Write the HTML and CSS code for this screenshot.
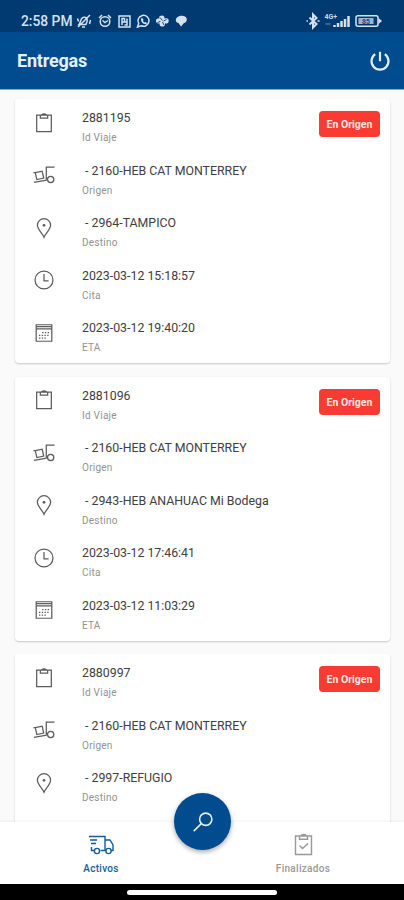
FILE: index.html
```
<!DOCTYPE html>
<html lang="es">
<head>
<meta charset="utf-8">
<title>Entregas</title>
<link rel="stylesheet" href="styles.css">
</head>
<body>
<svg class="defs" aria-hidden="true">
  <symbol id="clipboard" viewBox="0 0 24 24"><path d="M4 3.500h16v18H4zM8 3.500v3.200h8V3.500M9.500 3.500c0-2 5-2 5 0"/></symbol>
  <symbol id="loader" viewBox="0 0 24 24"><path d="M23.500 3.500h-9v13.500M1 20l14-2.500M2.500 9.500l7.500-1.600 1.700 7.500-7.500 1.600zM.5 9.500H3M15 16h1"/><circle cx="19.300" cy="16.800" r="3.400"/></symbol>
  <symbol id="pin" viewBox="0 0 24 24"><path d="M12 22C10.500 18 4.800 13.500 4.800 9a7.200 7.200 0 0 1 14.400 0c0 4.500-5.700 9-7.200 13z"/><circle class="solid" cx="12" cy="9" r="1.500"/></symbol>
  <symbol id="clock" viewBox="0 0 24 24"><circle cx="12" cy="12" r="9.800"/><path d="M12 5.500V13h5"/></symbol>
  <symbol id="calendar" viewBox="0 0 24 24"><path d="M3.500 3h17v18h-17zM3.500 7.500h17M3.500 5h17"/><path class="dots" d="M10 11.500h8M6.500 14.500h11.500M6.500 17.500h9"/></symbol>
</svg>
<div class="screen">
  <div class="status">
    <span class="time">2:58 PM</span>
    <svg class="status-left" viewBox="0 0 112 16">
      <path d="M3 11.500c2-2 1-6 4-7 3-1 5 1 4 4l-1 3zM2 14L14 2M6 14h3M1.500 5.500l1 3M14.500 7l-1 4"/>
      <circle cx="29" cy="8.500" r="4.800"/><path d="M23 5l3-3M35 5l-3-3M26.500 7.500l2.500 2 3-2"/>
      <path d="M43 3h11v11H43zM46 12V5.500h2.500V9H51V5.500M46 9h2M51 9v3h-2.500"/>
      <path d="M61.500 14l1.200-3.500a5.500 5.500 0 1 1 2.500 2.300z"/><path class="fill" d="M65 5.500l1.500-.5 1 2-.6 1 1.500 1.500 1-.6 1.600 1-.8 1.300c-3 .4-5.500-2.500-5.200-5.700z"/>
      <g transform="translate(2 0)"><path class="fill" d="M82 3c3-1.500 4.500 0 4.500 2.500 3-1 5 1 4 3.500-1 2-2.500 1.500-3.500 1.200.5 2.500-1.500 3.800-3.500 3.300-2-.5-2.200-2-1.800-3.200-2.500.7-4.200-.8-3.700-3 .5-2 2.300-2 3.500-1.500-.7-1-.5-2.200.5-2.800z"/><path class="gap" d="M82 4.500l2.500 3M88.500 6.500l-3 1.500M86 12l-1.500-3M79.500 9.500l3-1.200"/></g>
      <path class="fill" transform="translate(2 0)" d="M99 4.500c2-2 6-2 8-1 3 2 2 6-1 6.500L103 13.500 100.500 10c-3-.5-3.500-3.500-1.500-5.500z"/>
    </svg>
    <svg class="status-right" viewBox="0 0 78 18">
      <path class="bt" d="M3.500 5.500l7 6.500-3.500 3.500V2.500L10.500 6l-7 6.500"/><path d="M.5 9H2M11.500 9h2"/>
      <text class="net" x="18.500" y="7">4G+</text><path class="faint" d="M19.500 12h5"/>
      <path class="bars" d="M28.500 15v-2M32 15v-4M35.500 15V9M39 15V7M42.500 15V4"/>
      <path d="M52 3.800h18q2 0 2 2v6.400q0 2-2 2H52q-2 0-2-2V5.800q0-2 2-2z"/><path class="fill" d="M72.500 6l3.500 3-3.500 3z"/>
      <path class="charge" d="M52.500 6h15v6h-15z"/><text class="pct" x="56" y="11.700">85</text>
    </svg>
  </div>
  <header class="appbar">
    <h1>Entregas</h1>
    <svg class="power" viewBox="0 0 24 24"><path d="M7.200 5.200a8.500 8.500 0 1 0 9.600 0M12 2.800v9.500"/></svg>
  </header>
  <main class="list">
    <article class="card">
      <span class="badge">En Origen</span>
      <div class="row"><svg><use href="#clipboard"/></svg><div><p>2881195</p><small>Id Viaje</small></div></div>
      <div class="row"><svg><use href="#loader"/></svg><div><p class="place">- 2160-HEB CAT MONTERREY</p><small>Origen</small></div></div>
      <div class="row"><svg><use href="#pin"/></svg><div><p class="place">- 2964-TAMPICO</p><small>Destino</small></div></div>
      <div class="row"><svg><use href="#clock"/></svg><div><p>2023-03-12 15:18:57</p><small>Cita</small></div></div>
      <div class="row"><svg><use href="#calendar"/></svg><div><p>2023-03-12 19:40:20</p><small>ETA</small></div></div>
    </article>
    <article class="card">
      <span class="badge">En Origen</span>
      <div class="row"><svg><use href="#clipboard"/></svg><div><p>2881096</p><small>Id Viaje</small></div></div>
      <div class="row"><svg><use href="#loader"/></svg><div><p class="place">- 2160-HEB CAT MONTERREY</p><small>Origen</small></div></div>
      <div class="row"><svg><use href="#pin"/></svg><div><p class="place">- 2943-HEB ANAHUAC Mi Bodega</p><small>Destino</small></div></div>
      <div class="row"><svg><use href="#clock"/></svg><div><p>2023-03-12 17:46:41</p><small>Cita</small></div></div>
      <div class="row"><svg><use href="#calendar"/></svg><div><p>2023-03-12 11:03:29</p><small>ETA</small></div></div>
    </article>
    <article class="card">
      <span class="badge">En Origen</span>
      <div class="row"><svg><use href="#clipboard"/></svg><div><p>2880997</p><small>Id Viaje</small></div></div>
      <div class="row"><svg><use href="#loader"/></svg><div><p class="place">- 2160-HEB CAT MONTERREY</p><small>Origen</small></div></div>
      <div class="row"><svg><use href="#pin"/></svg><div><p class="place">- 2997-REFUGIO</p><small>Destino</small></div></div>
    </article>
  </main>
  <nav class="tabs">
    <div class="tab active">
      <svg viewBox="0 0 28 24"><path d="M2 3.500h16v14h-4.500M18 7h5l3 5v5.500h-2M18 17.500h1M7 17.500H4.500V14M3 7h7M4 10.500h5"/><circle cx="10" cy="18" r="2.600"/><circle cx="21.500" cy="18" r="2.600"/></svg>
      <span>Activos</span>
    </div>
    <div class="tab">
      <svg viewBox="0 0 28 24"><path d="M6.500 3h16v18.500h-16zM10.500 3v3.200h8V3M12 3c0-2 5-2 5 0M10.500 12.500l3 3 5.500-5"/></svg>
      <span>Finalizados</span>
    </div>
    <div class="fab"><svg viewBox="0 0 24 24"><circle cx="15" cy="9" r="6.700"/><path d="M10.200 13.800L1.800 22"/></svg></div>
  </nav>
  <div class="gesture"><i></i></div>
</div>
</body>
</html>
```
FILE: styles.css
```
* { box-sizing: border-box; }
body { margin: 0; font-family: Roboto, sans-serif; }
svg { fill: none; stroke: currentColor; display: block; overflow: visible; }
.defs { position: absolute; width: 0; height: 0; }
.solid, .fill { fill: currentColor; stroke: none; }
.screen { width: 404px; height: 900px; display: flex; flex-direction: column; overflow: hidden; background: #fafafa; }
.status { flex: none; height: 32px; background: #003a70; color: #d5e2ee; display: flex; align-items: center; padding: 10px 20px 0 21px; }
.time { font-size: 13.8px; font-weight: 500; line-height: 16px; width: 55px; white-space: nowrap; }
.status-left { width: 112px; height: 16px; stroke-width: 1.5; }
.status-right { width: 78px; height: 18px; margin-left: auto; margin-top: -1px; stroke-width: 1.5; }
.bt { stroke-width: 2; }
.gap { stroke: #003a70; stroke-width: .9; }
.bars { stroke-width: 2.5; }
.faint { opacity: .35; }
.charge { fill: #9db6ce; stroke: none; }
.net, .pct { stroke: none; fill: #c5d5e4; font-size: 7px; font-weight: 700; }
.pct { fill: #1d4c7c; }
.appbar { flex: none; height: 58px; background: #004c8f; border-bottom: 1px solid #87acc9; color: #e4f0fa; display: flex; align-items: center; justify-content: space-between; padding: 0 12px 0 17px; }
h1 { margin: 0; font-size: 18px; font-weight: 700; line-height: 24px; letter-spacing: -.2px; }
.power { width: 24px; height: 24px; stroke-width: 2.2; }
.list { flex: 1; min-height: 0; overflow: hidden; padding: 9px 14px 0 15px; }
.card { position: relative; height: 264px; margin-bottom: 13.6px; padding-top: 9px; background: #fff; border-radius: 4px; box-shadow: 0 1px 2px rgba(0,0,0,.2); }
.badge { position: absolute; top: 12px; right: 10px; width: 61px; height: 26px; border-radius: 4px; background: #f93b31; color: #ffe9e6; font-size: 10.5px; font-weight: 700; line-height: 27px; text-align: center; white-space: nowrap; }
.row { height: 52.6px; display: grid; grid-template-columns: 67px 1fr; }
.row svg { width: 22px; height: 22px; margin: 3.500px 0 0 17.500px; color: #5c5c5c; stroke-width: 1.35; }
.dots { stroke-dasharray: 1.5 1.5; }
.row p { margin: 0; font-size: 12.35px; line-height: 20px; color: #404040; white-space: nowrap; }
.row .place { padding-left: 3px; }
.row small { display: block; font-size: 10px; line-height: 19px; color: #929292; letter-spacing: .25px; }
.tabs { flex: none; position: relative; height: 62px; display: grid; grid-template-columns: 1fr 1fr; background: #fff; box-shadow: 0 -1px 3px rgba(0,0,0,.05); }
.tab { display: flex; flex-direction: column; align-items: center; padding-top: 11px; color: #999; }
.tab svg { width: 28px; height: 24px; stroke-width: 1.4; }
.tab span { margin-top: 5px; font-size: 10px; line-height: 14px; font-weight: 500; letter-spacing: .3px; }
.tab.active { color: #165b97; }
.fab { position: absolute; left: 174px; top: -29px; width: 57px; height: 57px; border-radius: 50%; background: #004c8f; color: #e4f0fa; display: grid; place-items: center; box-shadow: 0 2px 5px rgba(0,0,0,.35); }
.fab svg { width: 22px; height: 22px; stroke-width: 1.7; }
.gesture { flex: none; height: 16px; background: #000; display: flex; justify-content: center; padding-top: 6px; }
.gesture i { width: 150px; height: 5px; border-radius: 3px; background: #fff; }
```
